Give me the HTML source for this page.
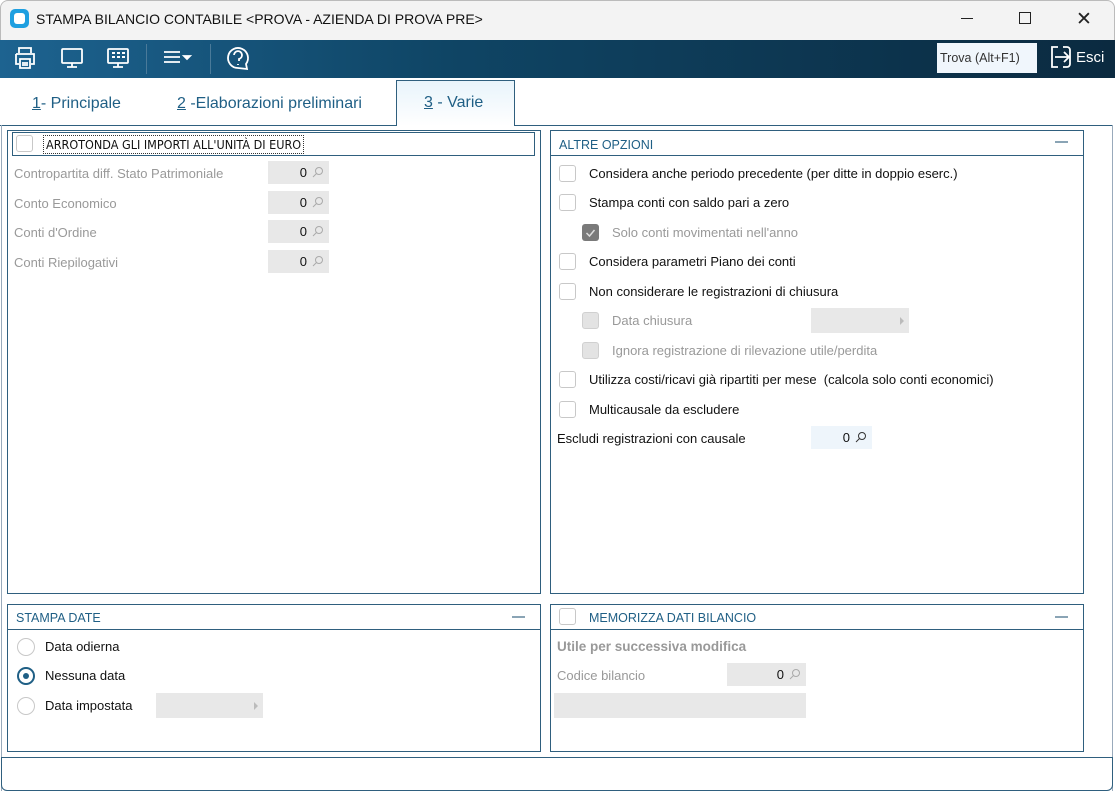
<!DOCTYPE html>
<html><head><meta charset="utf-8"><style>
*{box-sizing:border-box;margin:0;padding:0}
body{width:1115px;height:793px;background:#fff;font-family:"Liberation Sans","DejaVu Sans",sans-serif;font-size:13px;color:#111;position:relative;overflow:hidden}
.a{position:absolute}
.title{left:0;top:0;width:1115px;height:40px;background:#f3f3f3;border:1px solid #bbb;border-bottom:none;border-radius:8px 8px 0 0}
.tb{left:0;top:40px;width:1115px;height:38px;background:linear-gradient(90deg,#1d6390 0%,#0f4565 40%,#0b2a40 100%)}
.grp{border:1px solid #2f5f7e;background:#fff}
.hdr{color:#1f5f85;font-size:12.5px}
.cb{width:17px;height:17px;border:1px solid #c8c8c8;border-radius:3px;background:#fff}
.cbd{width:17px;height:17px;border:1px solid #d0d0d0;border-radius:3px;background:#e3e3e3}
.lbl{font-size:13px}
.gray{color:#999}
.fld{background:#e8e8e8;height:23px;font-size:13px;text-align:right;padding-right:22px;line-height:23px}
.mag{position:absolute;right:5px;top:5px;width:12px;height:12px}
.rad{width:18px;height:18px;border:1px solid #c8c8c8;border-radius:50%;background:#fff}
.min{width:13px;height:2px;background:#8aa4b5}
</style></head><body>
<div class="a title"></div>
<div class="a" style="left:10px;top:9px;width:19px;height:19px;border-radius:5px;background:#1e9fe0"><div style="margin:4px;width:11px;height:11px;border-radius:3px;background:#fff"></div></div>
<div class="a" style="left:36px;top:11px;font-size:14px;color:#111">STAMPA BILANCIO CONTABILE &lt;PROVA - AZIENDA DI PROVA PRE&gt;</div>
<div class="a" style="left:961px;top:18px;width:12px;height:1px;background:#222"></div>
<div class="a" style="left:1019px;top:12px;width:12px;height:12px;border:1px solid #222"></div>
<div class="a" style="left:1076px;top:8px;font-size:19px;color:#222">✕</div>

<div class="a tb"></div>
<svg class="a" style="left:12px;top:44px" width="260" height="30" fill="none" stroke="#fff" stroke-width="1.8">
<path d="M7 9V4h12v5M4 10h18v10h-3M4 10v10h3M8 15h10v9H8z M10 19h6M10 21h6"/>
<rect x="50" y="5" width="20" height="14" rx="1"/><path d="M60 19v4M55 23h10"/>
<rect x="96" y="5" width="20" height="14" rx="1"/><path d="M106 19v4M101 23h10"/><path d="M100 9h3M105 9h3M110 9h3M100 13h3M105 13h3M110 13h3" stroke-width="2"/>
<path d="M152 8h16M152 13h16M152 18h16"/><path d="M172 12l3 3 3-3z" fill="#fff"/>
<path d="M226 24a10 10 0 1 1 8-4l1 5z"/><path d="M222 11a4 4 0 1 1 5 4v2M226 20v1"/>
</svg>
<div class="a" style="left:146px;top:44px;width:1px;height:30px;background:#4a7a99"></div>
<div class="a" style="left:210px;top:44px;width:1px;height:30px;background:#4a7a99"></div>
<div class="a" style="left:937px;top:43px;width:100px;height:30px;background:#f0f6fc;font-size:12.5px;line-height:30px;padding-left:3px;color:#333">Trova (Alt+F1)</div>
<svg class="a" style="left:1049px;top:45px" width="24" height="24" fill="none" stroke="#fff" stroke-width="1.8"><path d="M9 2H3v20h6M14 2h4a3 3 0 0 1 3 3v14a3 3 0 0 1-3 3h-4"/><path d="M6 12h14M15 7l5 5-5 5"/></svg>
<div class="a" style="left:1076px;top:49px;color:#fff;font-size:15px">Esci</div>

<div class="a" style="left:32px;top:95px;font-size:16px;color:#1f5f85"><u>1</u>- Principale</div>
<div class="a" style="left:177px;top:95px;font-size:16px;color:#1f5f85"><u>2</u> -Elaborazioni preliminari</div>
<div class="a" style="left:396px;top:80px;width:119px;height:46px;border:1px solid #2f5f7e;border-bottom:none;background:linear-gradient(#e8f4fb,#fff);z-index:2"></div>
<div class="a" style="left:424px;top:94px;font-size:16px;color:#1f5f85;z-index:3"><u>3</u> - Varie</div>
<div class="a" style="left:0;top:125px;width:1113px;height:1px;background:#2f5f7e"></div>
<div class="a" style="left:1px;top:125px;width:1px;height:666px;background:#9ab"></div>
<div class="a" style="left:1112px;top:125px;width:1px;height:666px;background:#9ab"></div>

<div class="a grp" style="left:7px;top:130px;width:534px;height:464px"></div>
<div class="a" style="left:12px;top:132px;width:523px;height:24px;border:1px solid #2f5f7e"></div>
<div class="a cb" style="left:16px;top:135px"></div>
<div class="a" style="left:43px;top:135px;border:1px dotted #333;font-size:12.5px;padding:1px 2px;font-family:'DejaVu Sans Condensed','Liberation Sans',sans-serif">ARROTONDA GLI IMPORTI ALL'UNITÀ DI EURO</div>
<div class="a lbl gray" style="left:14px;top:166px">Contropartita diff. Stato Patrimoniale</div>
<div class="a lbl gray" style="left:14px;top:196px">Conto Economico</div>
<div class="a lbl gray" style="left:14px;top:225px">Conti d'Ordine</div>
<div class="a lbl gray" style="left:14px;top:255px">Conti Riepilogativi</div>
<div class="a fld" style="left:268px;top:161px;width:61px">0<svg class="mag" viewBox="0 0 12 12" fill="none" stroke="#aaa"><circle cx="7" cy="5" r="3.5"/><path d="M4.5 7.5L1 11"/></svg></div>
<div class="a fld" style="left:268px;top:191px;width:61px">0<svg class="mag" viewBox="0 0 12 12" fill="none" stroke="#aaa"><circle cx="7" cy="5" r="3.5"/><path d="M4.5 7.5L1 11"/></svg></div>
<div class="a fld" style="left:268px;top:220px;width:61px">0<svg class="mag" viewBox="0 0 12 12" fill="none" stroke="#aaa"><circle cx="7" cy="5" r="3.5"/><path d="M4.5 7.5L1 11"/></svg></div>
<div class="a fld" style="left:268px;top:250px;width:61px">0<svg class="mag" viewBox="0 0 12 12" fill="none" stroke="#aaa"><circle cx="7" cy="5" r="3.5"/><path d="M4.5 7.5L1 11"/></svg></div>

<div class="a grp" style="left:550px;top:130px;width:534px;height:464px"></div>
<div class="a" style="left:550px;top:155px;width:534px;height:1px;background:#2f5f7e"></div>
<div class="a hdr" style="left:559px;top:138px">ALTRE OPZIONI</div>
<div class="a min" style="left:1055px;top:141px"></div>
<div class="a cb" style="left:559px;top:165px"></div><div class="a lbl" style="left:589px;top:166px">Considera anche periodo precedente (per ditte in doppio eserc.)</div>
<div class="a cb" style="left:559px;top:194px"></div><div class="a lbl" style="left:589px;top:195px">Stampa conti con saldo pari a zero</div>
<div class="a" style="left:582px;top:224px;width:17px;height:17px;border-radius:3px;background:#7a7a7a"><svg width="17" height="17" fill="none" stroke="#ddd" stroke-width="1.5"><path d="M4.5 9l3 3 5-6"/></svg></div><div class="a lbl gray" style="left:612px;top:225px">Solo conti movimentati nell'anno</div>
<div class="a cb" style="left:559px;top:253px"></div><div class="a lbl" style="left:589px;top:254px">Considera parametri Piano dei conti</div>
<div class="a cb" style="left:559px;top:283px"></div><div class="a lbl" style="left:589px;top:284px">Non considerare le registrazioni di chiusura</div>
<div class="a cbd" style="left:582px;top:312px"></div><div class="a lbl gray" style="left:612px;top:313px">Data chiusura</div>
<div class="a" style="left:811px;top:308px;width:98px;height:25px;background:#e8e8e8"><div style="position:absolute;right:5px;top:9px;border-left:4px solid #bbb;border-top:4px solid transparent;border-bottom:4px solid transparent"></div></div>
<div class="a cbd" style="left:582px;top:342px"></div><div class="a lbl gray" style="left:612px;top:343px">Ignora registrazione di rilevazione utile/perdita</div>
<div class="a cb" style="left:559px;top:371px"></div><div class="a lbl" style="left:589px;top:372px">Utilizza costi/ricavi già ripartiti per mese&nbsp; (calcola solo conti economici)</div>
<div class="a cb" style="left:559px;top:401px"></div><div class="a lbl" style="left:589px;top:402px">Multicausale da escludere</div>
<div class="a lbl" style="left:557px;top:431px">Escludi registrazioni con causale</div>
<div class="a fld" style="left:811px;top:426px;width:61px;background:#eef5fb">0<svg class="mag" viewBox="0 0 12 12" fill="none" stroke="#333"><circle cx="7" cy="5" r="3.5"/><path d="M4.5 7.5L1 11"/></svg></div>

<div class="a grp" style="left:7px;top:604px;width:534px;height:148px"></div>
<div class="a" style="left:7px;top:629px;width:534px;height:1px;background:#2f5f7e"></div>
<div class="a hdr" style="left:16px;top:611px">STAMPA DATE</div>
<div class="a min" style="left:512px;top:616px"></div>
<div class="a rad" style="left:17px;top:638px"></div><div class="a lbl" style="left:45px;top:639px">Data odierna</div>
<div class="a rad" style="left:17px;top:667px;border-color:#1f5f85;border-width:2px"><div style="margin:4px;width:6px;height:6px;border-radius:50%;background:#1f5f85"></div></div><div class="a lbl" style="left:45px;top:668px">Nessuna data</div>
<div class="a rad" style="left:17px;top:697px"></div><div class="a lbl" style="left:45px;top:698px">Data impostata</div>
<div class="a" style="left:156px;top:693px;width:107px;height:25px;background:#e8e8e8"><div style="position:absolute;right:5px;top:9px;border-left:4px solid #bbb;border-top:4px solid transparent;border-bottom:4px solid transparent"></div></div>

<div class="a grp" style="left:550px;top:604px;width:534px;height:148px"></div>
<div class="a" style="left:550px;top:629px;width:534px;height:1px;background:#2f5f7e"></div>
<div class="a cb" style="left:559px;top:608px"></div>
<div class="a hdr" style="left:589px;top:611px">MEMORIZZA DATI BILANCIO</div>
<div class="a min" style="left:1055px;top:616px"></div>
<div class="a" style="left:557px;top:639px;font-weight:bold;color:#999;font-size:13.5px">Utile per successiva modifica</div>
<div class="a lbl gray" style="left:557px;top:668px">Codice bilancio</div>
<div class="a fld" style="left:727px;top:663px;width:79px">0<svg class="mag" viewBox="0 0 12 12" fill="none" stroke="#aaa"><circle cx="7" cy="5" r="3.5"/><path d="M4.5 7.5L1 11"/></svg></div>
<div class="a" style="left:554px;top:693px;width:252px;height:25px;background:#e8e8e8"></div>

<div class="a" style="left:1px;top:757px;width:1112px;height:34px;border:1px solid #2f5f7e;border-radius:0 0 6px 6px"></div>
</body></html>
